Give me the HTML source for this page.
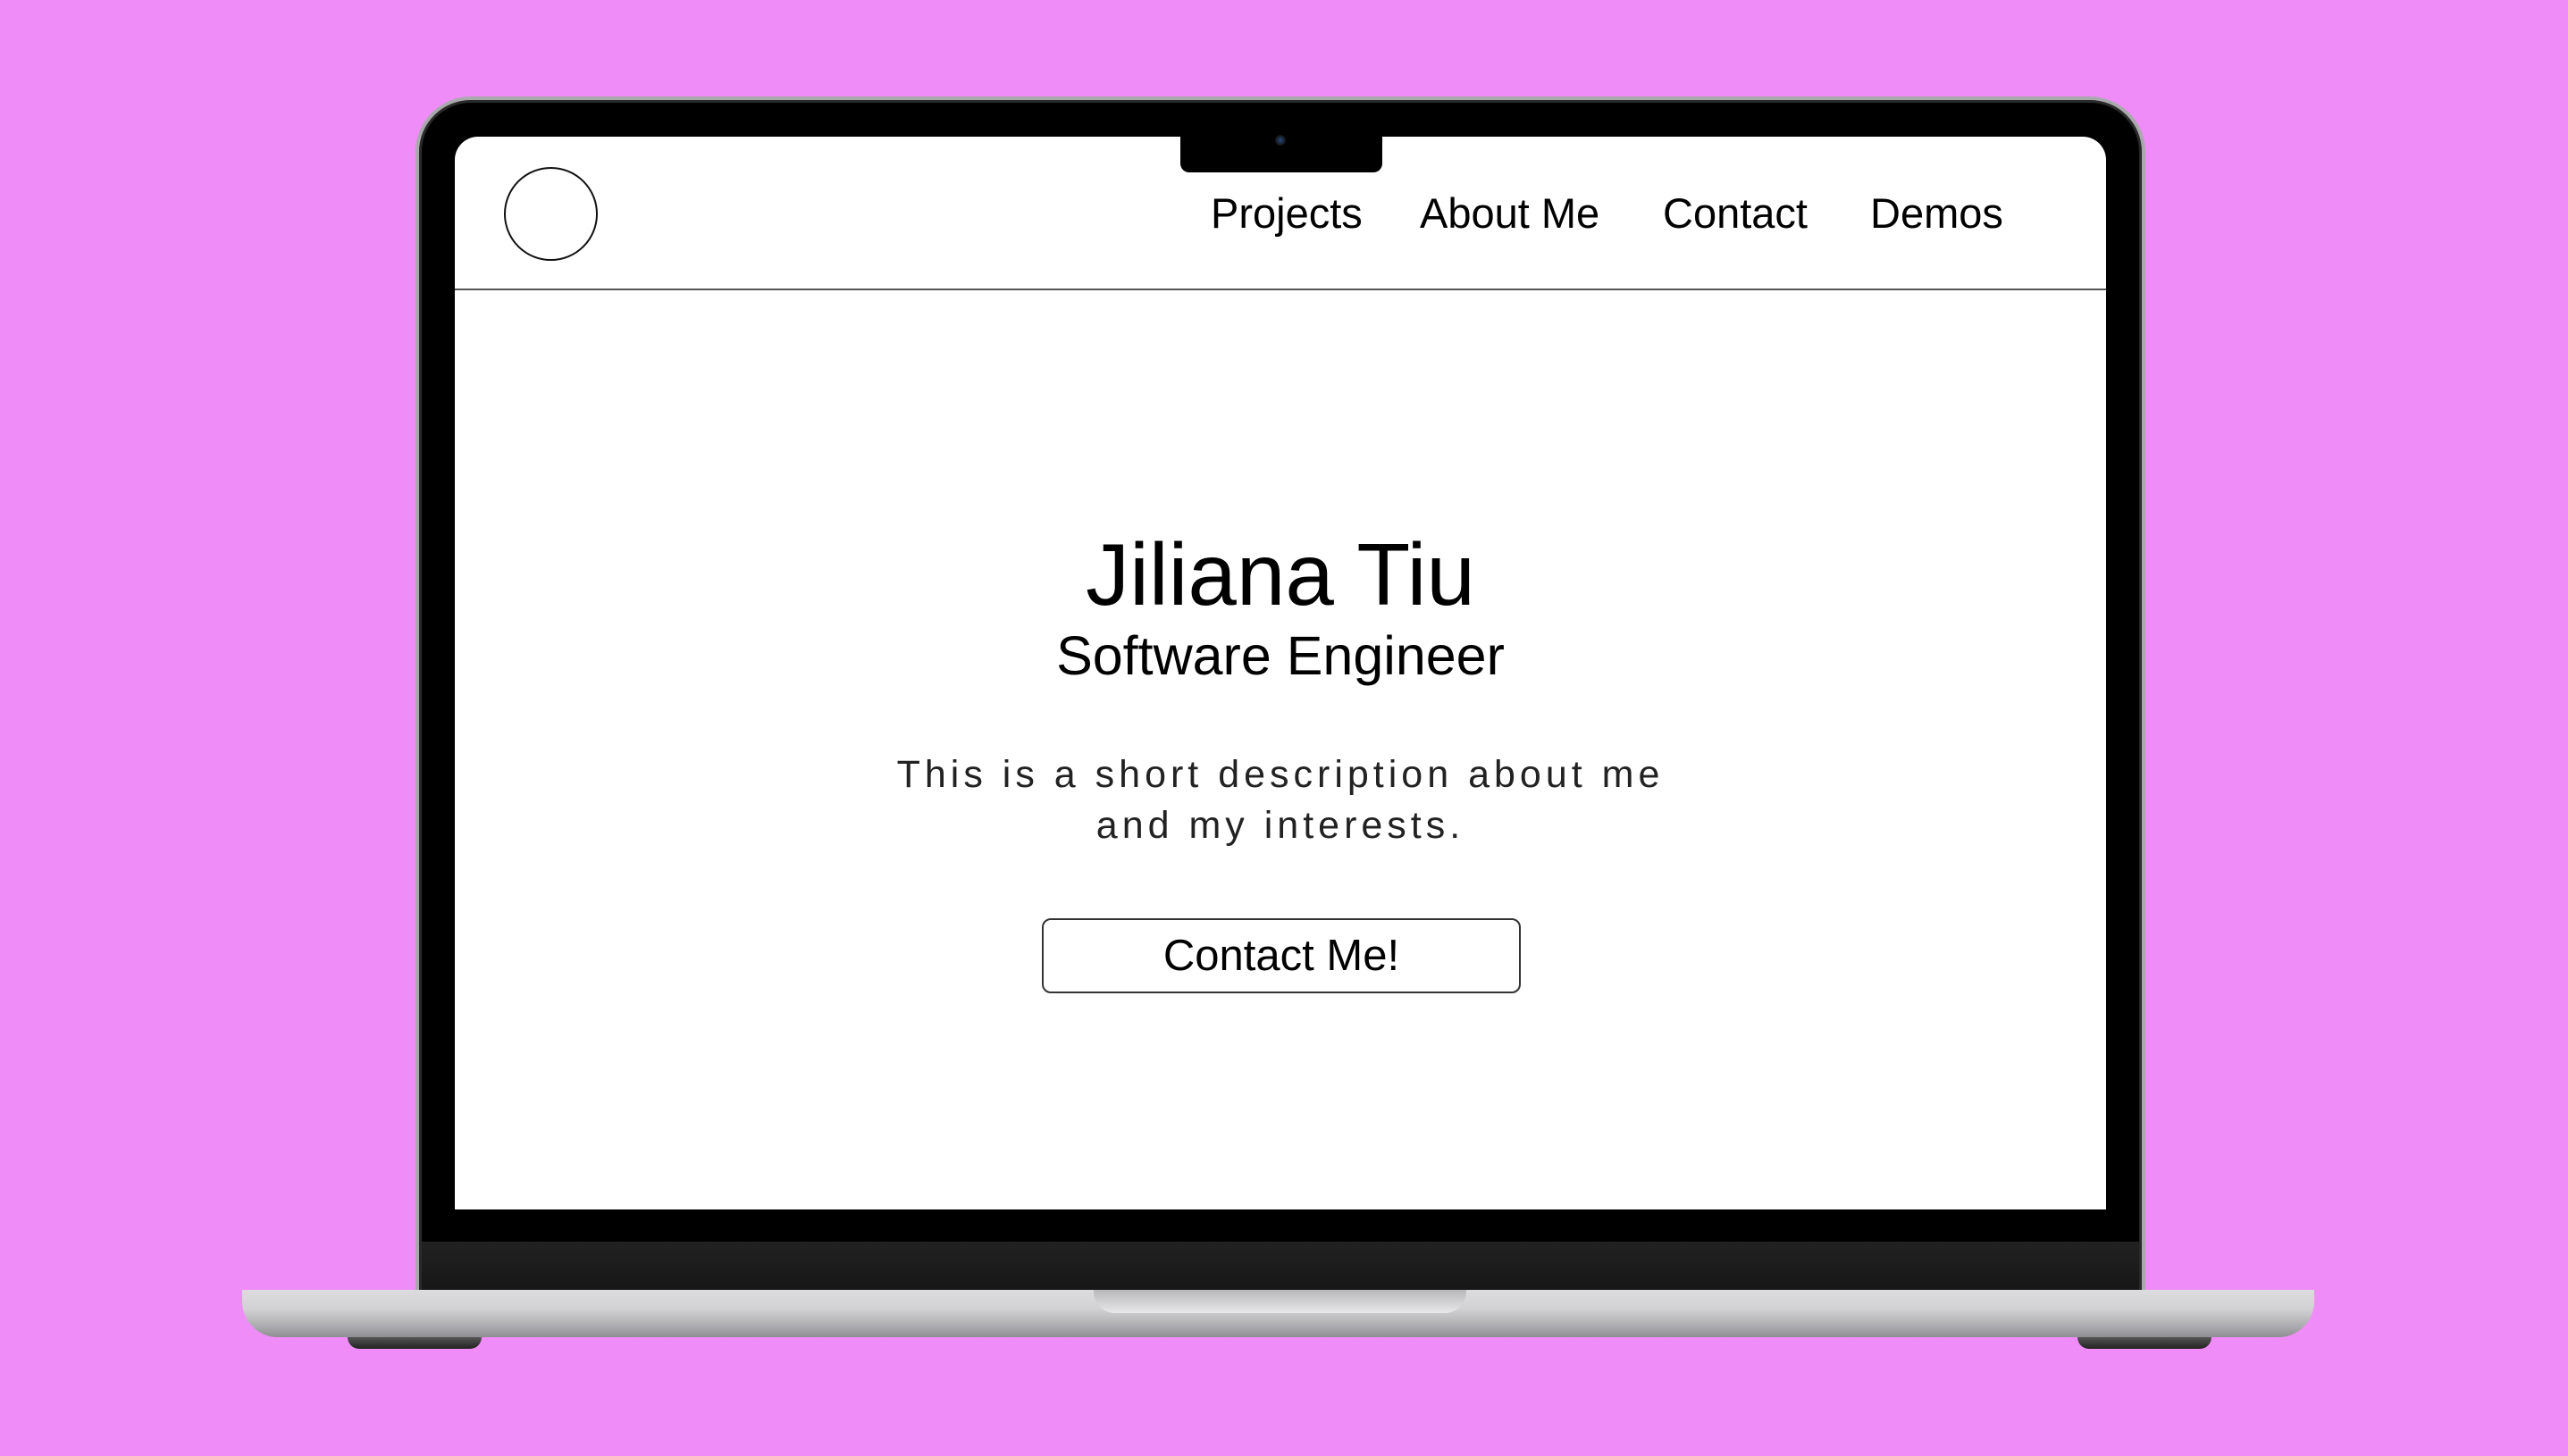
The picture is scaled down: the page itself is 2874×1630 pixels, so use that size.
<!DOCTYPE html>
<html><head><meta charset="utf-8"><style>
*{margin:0;padding:0;box-sizing:border-box}
body{width:2874px;height:1630px;background:#f08cf8;position:relative;overflow:hidden;font-family:"Liberation Sans",sans-serif;color:#000}
.abs{position:absolute}
.lid{left:465px;top:108px;width:1936px;height:1340px;background:#000;border-radius:62px 62px 0 0;border:4px solid #a9a9ad;border-bottom:none;box-shadow:inset 0 0 0 3px #2a2a2a}
.chin{left:472px;top:1390px;width:1922px;height:56px;background:linear-gradient(#222,#161616)}
.screen{left:509px;top:153px;width:1848px;height:1201px;background:#fff;border-radius:26px 26px 0 0;overflow:hidden}
.notch{left:1321px;top:150px;width:226px;height:43px;background:#000;border-radius:0 0 10px 10px}
.cam{left:1427px;top:151px;width:12px;height:12px;border-radius:50%;background:radial-gradient(#2a4a7a,#111 70%)}
.base{left:271px;top:1444px;width:2319px;height:53px;background:linear-gradient(#dcdcde 0%,#d2d2d4 40%,#a8a8ac 80%,#8e8e92 100%);border-radius:0 0 40px 40px}
.dip{left:1224px;top:1444px;width:417px;height:26px;background:linear-gradient(#b8b8bb,#e8e8ea);border-radius:0 0 24px 24px}
.foot{top:1497px;width:150px;height:13px;background:linear-gradient(#555,#222);border-radius:0 0 20px 20px}
.nav{top:58px;font-size:47px;white-space:nowrap}
.c{left:0;width:1848px;text-align:center;white-space:nowrap}
</style></head><body>
<div class="abs lid"></div>
<div class="abs chin"></div>
<div class="abs screen">
  <div class="abs" style="left:55px;top:34px;width:105px;height:105px;border:2px solid #111;border-radius:50%"></div>
  <div class="abs" style="left:0;top:170px;width:1848px;height:2px;background:#555"></div>
  <div class="abs nav" style="left:846px">Projects</div>
  <div class="abs nav" style="left:1080px">About Me</div>
  <div class="abs nav" style="left:1352px">Contact</div>
  <div class="abs nav" style="left:1584px">Demos</div>
  <div class="abs c" style="top:434px;font-size:98px">Jiliana Tiu</div>
  <div class="abs c" style="top:546px;font-size:61px">Software Engineer</div>
  <div class="abs c" style="top:686px;font-size:43px;letter-spacing:5px;line-height:57px;color:#222">This is a short description about me<br>and my interests.</div>
  <div class="abs" style="left:657px;top:875px;width:536px;height:84px;border:2px solid #333;border-radius:10px;font-size:49px;text-align:center;line-height:80px">Contact Me!</div>
</div>
<div class="abs notch"></div>
<div class="abs cam"></div>
<div class="abs base"></div>
<div class="abs dip"></div>
<div class="abs foot" style="left:389px"></div>
<div class="abs foot" style="left:2325px"></div>
</body></html>
